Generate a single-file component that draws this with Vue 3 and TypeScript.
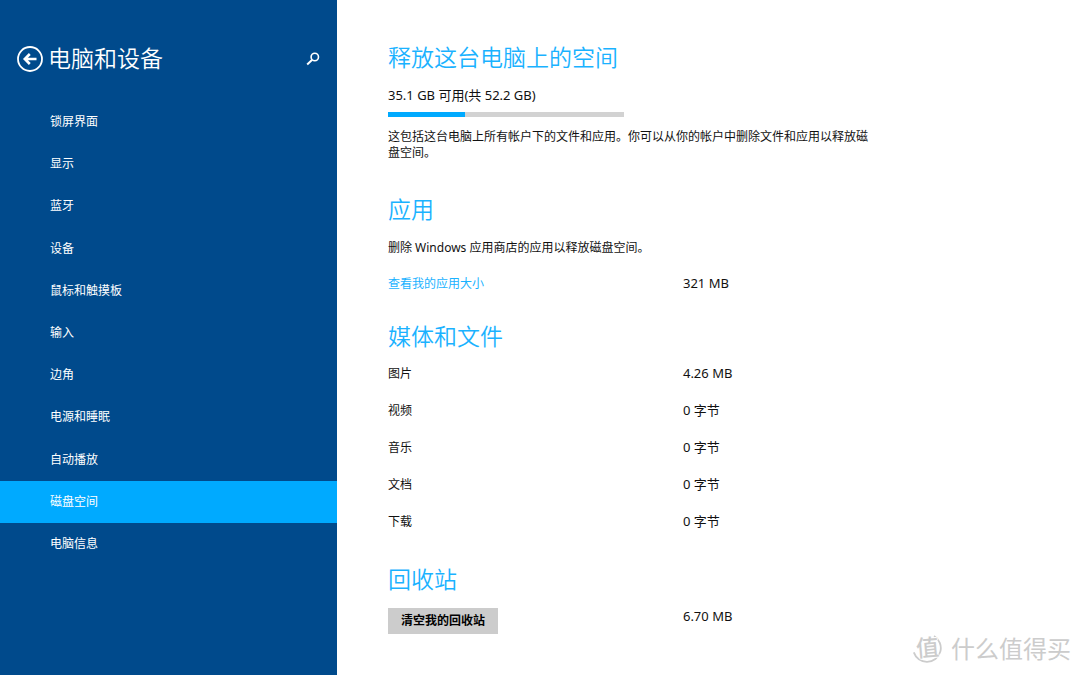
<script setup lang="ts">
interface SizeRow {
  label: string
  size: string
}

const navItems: string[] = [
  '锁屏界面',
  '显示',
  '蓝牙',
  '设备',
  '鼠标和触摸板',
  '输入',
  '边角',
  '电源和睡眠',
  '自动播放',
  '磁盘空间',
  '电脑信息',
]
const current = '磁盘空间'

const mediaRows: SizeRow[] = [
  { label: '图片', size: '4.26 MB' },
  { label: '视频', size: '0 字节' },
  { label: '音乐', size: '0 字节' },
  { label: '文档', size: '0 字节' },
  { label: '下载', size: '0 字节' },
]

const totalGb = 52.2
const freeGb = 35.1
const usedPercent = ((totalGb - freeGb) / totalGb) * 100
</script>

<template>
  <div class="settings">
    <aside class="sidebar">
      <header class="sidebar-head">
        <button class="icon-button" type="button" aria-label="返回">
          <svg width="26" height="26" viewBox="0 0 26 26" fill="none" stroke="currentColor">
            <circle cx="13" cy="13" r="12" stroke-width="1.8" />
            <path d="M8 13H19.5M12.8 8L7.8 13L12.8 18" stroke-width="2.6" />
          </svg>
        </button>
        <h1>电脑和设备</h1>
        <button class="icon-button search" type="button" aria-label="搜索">
          <svg width="14" height="14" viewBox="0 0 14 14" fill="none" stroke="currentColor">
            <circle cx="8.8" cy="5" r="3.7" stroke-width="1.6" />
            <path d="M6.2 7.8L1.2 12.4" stroke-width="2" />
          </svg>
        </button>
      </header>
      <nav>
        <ul class="nav-list">
          <li v-for="item in navItems" :key="item">
            <a
              href="#"
              :class="{ active: item === current }"
              :aria-current="item === current ? 'page' : undefined"
            >{{ item }}</a>
          </li>
        </ul>
      </nav>
    </aside>

    <main class="content">
      <section class="summary">
        <h2>释放这台电脑上的空间</h2>
        <p class="capacity">35.1 GB 可用(共 52.2 GB)</p>
        <div class="meter" role="img" aria-label="磁盘已用空间">
          <div class="meter-fill" :style="{ width: usedPercent + '%' }"></div>
        </div>
        <p>这包括这台电脑上所有帐户下的文件和应用。你可以从你的帐户中删除文件和应用以释放磁盘空间。</p>
      </section>

      <section class="apps">
        <h2>应用</h2>
        <p>删除 Windows 应用商店的应用以释放磁盘空间。</p>
        <div class="row">
          <a href="#">查看我的应用大小</a>
          <span class="size">321 MB</span>
        </div>
      </section>

      <section class="media">
        <h2>媒体和文件</h2>
        <dl>
          <div v-for="row in mediaRows" :key="row.label" class="row">
            <dt>{{ row.label }}</dt>
            <dd class="size">{{ row.size }}</dd>
          </div>
        </dl>
      </section>

      <section class="recycle">
        <h2>回收站</h2>
        <div class="row">
          <div><button class="empty-button" type="button">清空我的回收站</button></div>
          <span class="size">6.70 MB</span>
        </div>
      </section>
    </main>

    <div class="watermark">
      <span class="badge">
        <svg width="30" height="30" viewBox="0 0 30 30" fill="none" stroke="currentColor">
          <path d="M22 3.1A13.8 13.8 0 0 1 15 28.8A13.8 13.8 0 0 1 1.8 19.4" stroke-width="1.8" />
        </svg>
        <span class="badge-text">值</span>
      </span>
      <span>什么值得买</span>
    </div>
  </div>
</template>

<style>
body {
  margin: 0;
}
</style>

<style scoped>
.settings {
  position: relative;
  display: grid;
  grid-template-columns: 31.2% 1fr;
  min-height: 100vh;
  background: #fff;
  color: #111;
  font-family: "Noto Sans", "Noto Sans CJK SC", sans-serif;
  font-size: 12px;
  line-height: 16px;
}

h1,
h2,
p,
ul,
dl,
dd {
  margin: 0;
  padding: 0;
}

h1,
h2 {
  font-family: "Noto Sans CJK SC", sans-serif;
  font-size: 23px;
  font-weight: 350;
  line-height: 32px;
}

button {
  border: 0;
  color: inherit;
  font: inherit;
}

.sidebar {
  background: #004a8c;
  color: #fff;
}

.sidebar-head {
  display: flex;
  align-items: center;
  height: 34px;
  padding: 42px 17px 25px;
}

.sidebar-head h1 {
  margin-left: 5px;
  padding-bottom: 4px;
}

.icon-button {
  display: flex;
  padding: 0;
  background: none;
}

.search {
  margin-left: auto;
}

.nav-list {
  display: grid;
  grid-auto-rows: 1fr;
  height: 464px;
  list-style: none;
}

.nav-list a {
  display: flex;
  align-items: center;
  height: 100%;
  box-sizing: border-box;
  padding: 0 50px;
  color: #fff;
  text-decoration: none;
}

.nav-list a.active {
  background: #00aaff;
}

.content {
  padding: 40px 51px 32px;
}

h2 {
  color: #1ab2ff;
}

section {
  max-width: 500px;
}

.summary {
  margin-bottom: 31px;
}

.summary p {
  max-width: 490px;
}

.capacity {
  margin-top: 15px;
  font-size: 13px;
}

.meter {
  width: 236px;
  height: 5px;
  margin: 9px 0 12px;
  background: #d2d2d2;
}

.meter-fill {
  height: 100%;
  background: #00aaff;
}

.apps {
  margin-bottom: 27px;
}

.apps p {
  margin: 16px 0 19px;
}

.row {
  display: grid;
  grid-template-columns: 295px 1fr;
  align-items: baseline;
}

.row a {
  color: #1ab2ff;
  text-decoration: none;
}

.size {
  font-size: 13px;
}

.media {
  margin-bottom: 32px;
}

.media dl {
  display: grid;
  gap: 20px;
  margin-top: 14px;
}

.recycle .row {
  align-items: start;
  margin-top: 14px;
}

.empty-button {
  height: 26px;
  padding: 0 13px;
  background: #ccc;
  color: #000;
  font-weight: 600;
}

.watermark {
  position: absolute;
  right: 9px;
  bottom: 10px;
  display: flex;
  align-items: center;
  gap: 9px;
  color: #ccc;
  font-family: "Noto Sans CJK SC", sans-serif;
  font-size: 24px;
  line-height: 32px;
}

.badge {
  display: grid;
  place-items: center;
}

.badge > * {
  grid-area: 1 / 1;
}

.badge svg {
  display: block;
}

.badge-text {
  padding-bottom: 3px;
  font-size: 23px;
  font-weight: 500;
  text-shadow: 1px 0 #fff, -1px 0 #fff, 0 1px #fff, 0 -1px #fff;
  transform: rotate(-5deg);
}
</style>
